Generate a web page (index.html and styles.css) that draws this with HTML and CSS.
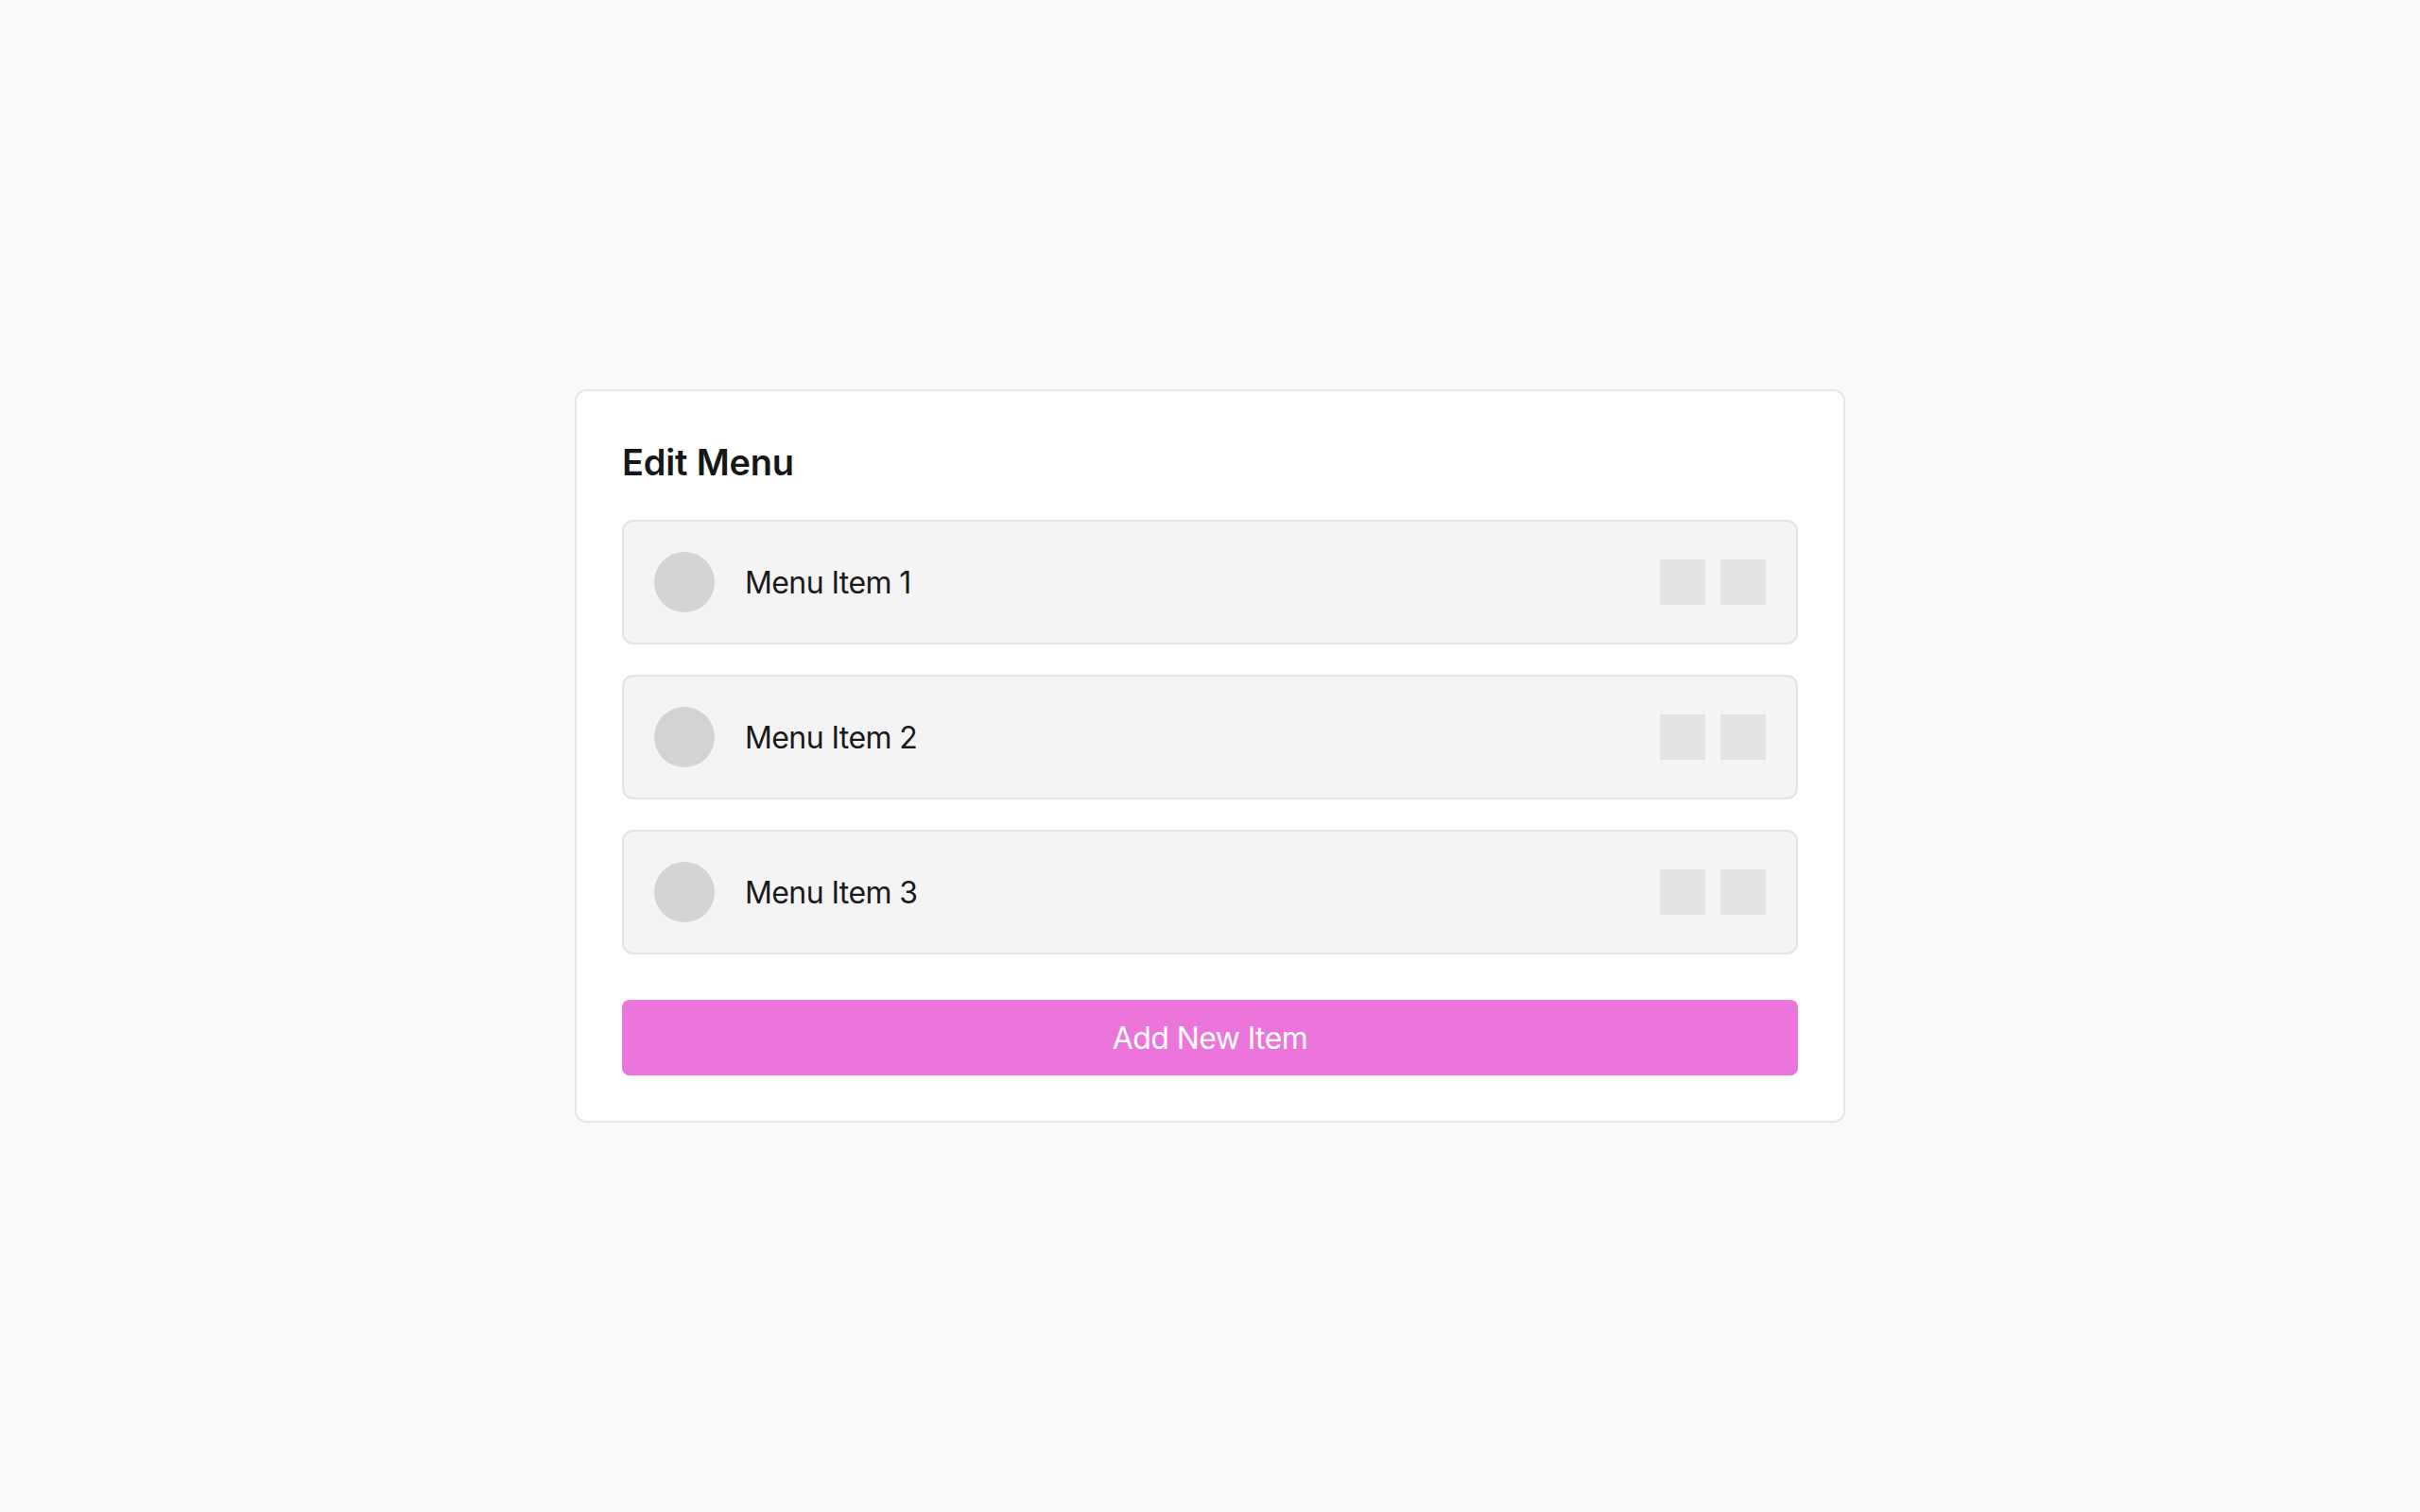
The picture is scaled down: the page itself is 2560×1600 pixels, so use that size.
FILE: index.html
```html
<!DOCTYPE html>
<html lang="en">
<head>
    <meta charset="UTF-8">
    <title>Edit Menu</title>
    <link rel="stylesheet" href="styles.css">
</head>
<body>
    <div class="page">
        <div class="menu-card">
            <h2 class="menu-title">Edit Menu</h2>

            <ul class="menu-list">
                <li class="menu-item">
                    <span class="item-icon"></span>
                    <span class="item-label">Menu Item 1</span>
                    <span class="item-actions">
                        <span class="action-box"></span>
                        <span class="action-box"></span>
                    </span>
                </li>
                <li class="menu-item">
                    <span class="item-icon"></span>
                    <span class="item-label">Menu Item 2</span>
                    <span class="item-actions">
                        <span class="action-box"></span>
                        <span class="action-box"></span>
                    </span>
                </li>
                <li class="menu-item">
                    <span class="item-icon"></span>
                    <span class="item-label">Menu Item 3</span>
                    <span class="item-actions">
                        <span class="action-box"></span>
                        <span class="action-box"></span>
                    </span>
                </li>
            </ul>

            <button class="add-button">Add New Item</button>
        </div>
    </div>
</body>
</html>
```

FILE: styles.css
```css
body {
    font-family: Inter, "Noto Sans", sans-serif;
    margin: 0;
    padding: 0;
    background-color: #fafafa;
    color: #1a1a1a;
}

.page {
    min-height: 100vh;
    display: flex;
    align-items: center;
    justify-content: center;
}

/* the white panel in the middle */
.menu-card {
    width: 1344px;
    box-sizing: border-box;
    background-color: #fff;
    border: 2px solid #e6e6e6;
    border-radius: 12px;
    padding: 48px;
}

.menu-title {
    font-size: 38px;
    font-weight: 600;
    line-height: 54px;
    letter-spacing: -0.2px;
    margin: 0 0 34px 0;
    color: #171717;
}

.menu-list {
    list-style: none;
    padding: 0;
    margin: 0;
    display: flex;
    flex-direction: column;
    gap: 32px;
}

.menu-item {
    display: flex;
    align-items: center;
    gap: 32px;
    padding: 32px;
    background-color: #f4f4f4;
    border: 2px solid #e4e4e4;
    border-radius: 12px;
}

.item-icon {
    width: 64px;
    height: 64px;
    border-radius: 50%;
    background-color: #d4d4d4;
    flex-shrink: 0;
}

.item-label {
    flex: 1;
    font-size: 32px;
    letter-spacing: -0.6px;
    color: #1a1a1a;
}

.item-actions {
    display: flex;
    gap: 16px;
}

.action-box {
    width: 48px;
    height: 48px;
    background-color: #e3e3e3;
}

.add-button {
    display: block;
    width: 100%;
    height: 80px;
    margin-top: 48px;
    border: none;
    border-radius: 8px;
    background-color: #ec75dc;
    color: #fff;
    font-family: Inter, "Noto Sans", sans-serif;
    font-size: 32px;
    font-weight: 400;
    letter-spacing: -0.6px;
    cursor: pointer;
}
```
